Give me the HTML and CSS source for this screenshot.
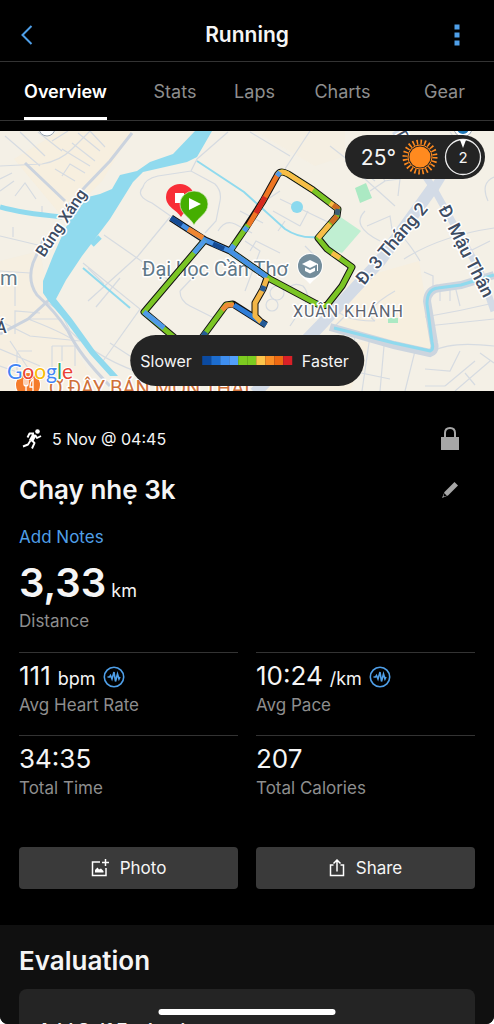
FILE: index.html
```
<!DOCTYPE html>
<html lang="en">
<head>
    <meta charset="UTF-8">
    <meta name="viewport" content="width=device-width, initial-scale=1.0">
    <title>Running</title>
    <link rel="stylesheet" href="styles.css">
</head>
<body>
    <div class="app">
        <header class="topbar">
            <button class="icon-btn back" aria-label="Back">
                <svg width="12" height="20" viewBox="0 0 12 20"><path d="M10.500 1L1.500 10L10.500 19" fill="none" stroke="#4f9fe8" stroke-width="2"/></svg>
            </button>
            <h1>Running</h1>
            <button class="icon-btn" aria-label="More">
                <svg width="6" height="22" viewBox="0 0 6 22" fill="#4f9fe8"><path d="M0.500 0.500h5v5h-5zM0.500 8.500h5v5h-5zM0.500 16.500h5v5h-5z"/></svg>
            </button>
        </header>

        <nav class="tabs">
            <button class="tab active">Overview</button>
            <button class="tab">Stats</button>
            <button class="tab">Laps</button>
            <button class="tab">Charts</button>
            <button class="tab">Gear</button>
        </nav>

        <main>
            <section class="map">
                <svg class="map-canvas" viewBox="0 130 494 260" preserveAspectRatio="xMidYMid slice">
                    <rect y="130" width="494" height="260" fill="#f4f0e6"/>
                    <!-- built up areas -->
                    <g fill="#f8eedb">
                        <path d="M60 130h72l-30 50l-38 38l-50-60z" opacity=".7"/>
                        <path d="M0 260l40-10l10 55l50 85H0z" opacity=".5"/>
                        <path d="M334 325l100 25l-15-90l-70 20zM300 350l70-10l-20 50h-90z" opacity=".7"/>
                        <path d="M255 130h90v25l-30 10z" opacity=".4"/>
                    </g>
                    <!-- parks -->
                    <path d="M339 215L361 230L342 252L327 246L321 237Z" fill="#c0efd2"/>
                    <path d="M355 187l11-5l6 15l-12 5zM388 317h10v5h-10z" fill="#abe9c3"/>
                    <!-- small streets -->
                    <g fill="none" stroke="#d6dbe1" stroke-width="1.200">
                        <path d="M0 165L42 163Q60 160 72 148L90 130M5 135L40 165M20 131L45 155M38 131L62 150M52 140L68 130M62 148L90 165M72 142L95 160M78 132L100 150M90 130L105 146M55 168L75 180M62 175L70 163L85 172M0 178L12 172M0 190L14 180M15 195L25 182L36 198M0 235L42 245M13 236V226M42 212V205"/>
                        <path d="M143 186Q145 178 158 175L191 170L215 183Q222 190 220 200L216 220L205 232M143 186Q135 195 152 202L172 216M197 158L191 170M197 158L228 131M170 216L138 255M138 255L88 300M104 234L170 280M83 262L140 308L103 360M110 342L130 355"/>
                        <path d="M218 230Q225 218 235 223L252 232M240 210L263 222M180 290Q185 285 205 263M180 290Q180 300 190 305L220 320M245 240L260 250L245 290"/>
                        <path d="M283 171L310 130M250 131L290 155M265 200L280 190M273 210L300 225M280 198L330 222M285 220L278 230M300 180L315 188M300 225L308 210M250 250L256 240L280 252M305 245L320 260"/>
                        <path d="M330 145L375 180M345 160L395 205M375 165L385 180L370 190M384 180L400 178L398 195M365 210Q350 225 380 240M367 225L390 215L393 235M395 230Q405 235 420 260M404 258Q440 235 494 227M494 176Q480 182 488 200"/>
                        <path d="M424 271L433 275V290M395 290Q360 310 375 320M434 350Q450 340 494 345M440 300V285M450 300V285M460 305L455 285M425 316Q460 310 494 302M427 325L494 318M415 350L405 390M370 335L362 390M384 345L380 390M355 333L352 370L390 378M425 368L450 370L460 350M445 385L475 360M455 390L490 360M465 372L475 384M425 385H445M480 352L494 362M335 325L345 315M334 300Q335 320 375 320"/>
                        <circle cx="277" cy="292" r="7"/><circle cx="272" cy="304" r="6"/>
                        <path d="M287 290Q292 280 303 285Q312 295 302 307L290 325"/>
                        <path d="M0 270L30 272M0 320L30 335L80 340M15 333V310L40 312M30 318H60M10 340L30 370M0 348L40 365M18 350H32M17 350V370M52 345H75V365M52 345V390M62 345V360M0 365L20 372M15 275V305M28 318Q60 330 75 340M45 300L60 310L70 330Q100 360 150 375"/>
                        <path d="M96 306L120 277M88 267L104 283M450 131L480 170M400 150L425 140M490 240L470 250"/>
                    </g>
                    <!-- main streets -->
                    <g fill="none" stroke="#cbd3de" stroke-width="3">
                        <path d="M132 132L110 160L85 186L62 212M25 162L65 200M45 235L33 262Q27 280 37 294Q55 310 68 330Q80 355 110 385M50 298L28 318L0 333"/>
                    </g>
                    <g fill="none" stroke="#d3dbe6">
                        <path d="M434 185L380 260L320 325L255 392" stroke-width="12"/>
                        <path d="M395 130L434 188L480 270L494 310" stroke-width="7"/>
                        <path d="M434 188L448 165" stroke-width="9"/>
                        <path d="M330 326L394 344L430 352Q436 350 434 342L427 300Q428 288 440 287L461 284L494 274" stroke-width="8" stroke="#ccd5df"/>
                    </g>
                    <!-- water -->
                    <path d="M195 130L173 153L150 161L137 170L120 174L112 188L100 193L88 196L72 216L65 228L53 255L43 280L43 292L50 302L67 322L90 353L110 375H118L95 350L72 318L56 298L66 279L82 255L110 218L133 181L143 171L187 161L197 156L212 130Z" fill="#90daee"/>
                    <g fill="none" stroke="#90daee">
                        <path d="M0 206Q20 212 62 216" stroke-width="5"/>
                        <path d="M197 160L244 191L285 228Q300 238 318 236" stroke-width="2"/>
                        <path d="M83 267L130 307" stroke-width="2"/>
                        <path d="M92 244L100 236" stroke-width="5"/>
                        <path d="M334 327L394 342L430 350Q434 349 432 341L427 303Q427 288 438 287L461 284L494 274" stroke-width="3"/>
                    </g>
                    <circle cx="297" cy="206" r="6" fill="#8bd9ee"/>

                    <!-- place names under the track -->
                    <text class="place uni" x="142" y="275">Đại học Cần Thơ</text>

                    <!-- track -->
                    <g fill="none" stroke="#111" stroke-width="7" stroke-linejoin="round">
                        <path d="M171 217L188 228L205 239L230 250L245 228L263 200L278 173Q281 169 288 173L313 189L338 208L337 215L318 237L327 248L352 266L342 285L327 304Q322 306 315 302L270 278L230 250"/>
                        <path d="M205 239L144 311L176 338M201 338L226 304L233 303L266 324M267 277L263 288L255 302V315L261 321"/>
                    </g>
                    <g fill="none" stroke-width="5" stroke-linejoin="round">
                        <path d="M230 250L270 278L315 302Q322 306 327 304L342 285L352 266L327 248L318 237L337 215L338 208L313 189L288 173Q281 169 278 173" stroke="#7bc525"/>
                        <path d="M278 173Q281 169 288 173L313 189M330 202L337 207M318 237L330 223M332 252L340 257" stroke="#f8bd47"/>
                        <path d="M337 215L331 222M333 204L339 208" stroke="#cc6b23"/>
                        <path d="M338 208L337 214" stroke="#3d5c74"/>
                        <path d="M278 173L263 200L248 225" stroke="#ee7623"/>
                        <path d="M265 196L256 212" stroke="#d52a20"/>
                        <path d="M248 224L230 250" stroke="#7bc525"/>
                        <path d="M247 226L244 230M234 244L230 250M280 171L277 175" stroke="#4f9ae8"/>
                        <path d="M171 217L188 228L205 239L230 250L267 276" stroke="#4590e4"/>
                        <path d="M171 217L182 224M213 243L224 248" stroke="#154b94"/>
                        <path d="M188 228L203 237" stroke="#ef8631"/>
                        <path d="M205 239L144 311L176 338" stroke="#7bc525"/>
                        <path d="M205 239L194 252M144 311L164 327" stroke="#4f9ae8"/>
                        <path d="M201 338L226 304L233 303" stroke="#7bc525"/>
                        <path d="M222 309L227 304L234 304" stroke="#ef8b36"/>
                        <path d="M234 304L266 324" stroke="#2f7dd7"/>
                        <path d="M267 277L263 288L255 302V315L261 321" stroke="#f3b647"/>
                        <path d="M264 285L262 290M261 321L266 324M203 335L206 331" stroke="#255b96"/>
                    </g>

                    <!-- university pin -->
                    <path d="M310 283C306 278 297 274 297 265A13 13 0 0 1 323 265C323 274 314 278 310 283Z" fill="#fff"/>
                    <circle cx="310" cy="265" r="12" fill="#748d9b"/>
                    <path d="M302 263L310 259L318 263L310 267Z" fill="#fff"/>
                    <path d="M305 266.500V270L310 272.500L315 270V266.500L310 269Z" fill="#fff"/>
                    <path d="M317.500 263V270" stroke="#fff"/>

                    <!-- start and finish pins -->
                    <path d="M181 216C177 209 166 206 166 196A14 13 0 0 1 194 196C194 206 185 209 181 216Z" fill="#f82e37"/>
                    <path d="M175 192h9v10h-9z" fill="#fff"/>
                    <path d="M194 224C190 216 180 213 180 203A14 13 0 0 1 208 203C208 213 198 216 194 224Z" fill="#45ae00" stroke="#dcebcf" stroke-width=".7"/>
                    <path d="M189 197L201 203L189 209Z" fill="#fff"/>

                    <g class="place">
                        <text class="road" transform="translate(44 257) rotate(-56)">Búng Xáng</text>
                        <text class="road big" transform="translate(364 285) rotate(-50)">Đ. 3 Tháng 2</text>
                        <text class="road big" transform="translate(438 208) rotate(63)">Đ. Mậu Thân</text>
                        <text class="district" x="293" y="316">XUÂN KHÁNH</text>
                        <text class="uni" x="0" y="284">m</text>
                        <text class="road" x="-4" y="332">Á</text>
                        <text class="road" transform="translate(394 131) rotate(60)">T</text>
                        <text class="food" x="49" y="394">Ơ ĐÂY BÁN MÓN THÁI</text>
                    </g>
                    <g fill="#fff" stroke="#9aa6b2"><circle cx="47" cy="127" r="8"/><circle cx="463" cy="127" r="9"/></g>
                    <circle cx="463" cy="127" r="6" fill="#1d77b8"/>
                    <circle cx="28" cy="384" r="13" fill="#fff"/>
                    <circle cx="28" cy="384" r="12" fill="#f57c2b"/>
                    <path d="M24 378V383Q24 385 26 385V391M26 378V385M28 378V383Q28 385 26 385M33 391V378Q30 380 30 386H33" fill="none" stroke="#fff" stroke-width="1.300"/>
                    <text class="google" x="7" y="378"><tspan fill="#4285f4">G</tspan><tspan fill="#ea4335">o</tspan><tspan fill="#fbbc05">o</tspan><tspan fill="#4285f4">g</tspan><tspan fill="#34a853">l</tspan><tspan fill="#ea4335">e</tspan></text>
                </svg>

                <div class="weather">
                    <span>25°</span>
                    <svg width="36" height="36" viewBox="-18 -18 36 36">
                        <circle r="14.500" fill="none" stroke="#ff8a1f" stroke-width="6" stroke-dasharray="1.500 2.296"/>
                        <circle r="12.500" fill="#242424"/>
                        <circle r="12" fill="none" stroke="#ff8a1f"/>
                        <circle r="10.500" fill="#ff8a1f"/>
                    </svg>
                    <svg width="38" height="38" viewBox="-19 -19 38 38">
                        <circle r="17.500" fill="none" stroke="#eee" stroke-width="1.300"/>
                        <path d="M-3 -17H3L0 -9Z" fill="#fff"/>
                        <text class="wind" y="6" text-anchor="middle">2</text>
                    </svg>
                </div>

                <div class="legend">
                    <span>Slower</span>
                    <div class="scale"><i class="s1"></i><i class="s2"></i><i class="s3"></i><i class="s4"></i><i class="s5"></i><i class="s5"></i><i class="s6"></i><i class="s7"></i><i class="s8"></i><i class="s9"></i></div>
                    <span>Faster</span>
                </div>
            </section>

            <section class="summary">
                <div class="row meta">
                    <svg width="20" height="20" viewBox="0 0 20 20">
                        <circle cx="15.500" cy="2.500" r="2.300" fill="#fff"/>
                        <path d="M12.500 5.500L9 12" fill="none" stroke="#fff" stroke-width="4.500" stroke-linejoin="round"/>
                        <path d="M12 4.500L7.500 4.500L5.500 8.500M13 6L15 9L19 7M9.500 11L12.500 14L10 19.500M8.500 11.500L6 15.500L1 17.500" fill="none" stroke="#fff" stroke-width="1.900" stroke-linejoin="round"/>
                    </svg>
                    <span>5 Nov @ 04:45</span>
                    <button class="icon-btn end" aria-label="Privacy">
                        <svg width="18" height="24" viewBox="0 0 18 24"><path d="M0 10h18v13H0z" fill="#a6a6a6"/><path d="M4 11V6Q4 1 9 1T14 6V11" fill="none" stroke="#a6a6a6" stroke-width="2"/></svg>
                    </button>
                </div>
                <div class="row title">
                    <h2>Chạy nhẹ 3k</h2>
                    <button class="icon-btn end" aria-label="Edit name">
                        <svg width="18" height="18" viewBox="0 0 18 18"><path d="M13.500 1L17 4.500L7 14.500L1 17L3.500 11Z" fill="#a6a6a6"/><path d="M3.500 12L4.500 13.500L6 14.500L3 15.500L2.500 15Z" fill="#000"/></svg>
                    </button>
                </div>
                <a class="notes" href="#">Add Notes</a>
                <div class="distance"><strong>3,33</strong> km</div>
                <div class="label">Distance</div>

                <div class="stats">
                    <div class="stat">
                        <div class="value">111 <small>bpm</small>
                            <svg class="pulse" width="22" height="22" viewBox="0 0 22 22"><circle cx="11" cy="11" r="9.700"/><path d="M4.500 11H6.500L7.500 9.500L9 13L11 6L12.500 15.500L14.500 8L16 13L17 11"/></svg>
                        </div>
                        <div class="label">Avg Heart Rate</div>
                    </div>
                    <div class="stat">
                        <div class="value">10:24 <small>/km</small>
                            <svg class="pulse" width="22" height="22" viewBox="0 0 22 22"><circle cx="11" cy="11" r="9.700"/><path d="M4.500 11H6.500L7.500 9.500L9 13L11 6L12.500 15.500L14.500 8L16 13L17 11"/></svg>
                        </div>
                        <div class="label">Avg Pace</div>
                    </div>
                    <div class="stat">
                        <div class="value">34:35</div>
                        <div class="label">Total Time</div>
                    </div>
                    <div class="stat">
                        <div class="value">207</div>
                        <div class="label">Total Calories</div>
                    </div>
                </div>

                <div class="actions">
                    <button class="action">
                        <svg width="18" height="18" viewBox="0 0 18 18"><path d="M9 3H1.500V16.500H15V9M14.500 0V7M11 3.500H18" fill="none" stroke="#fff" stroke-width="1.500"/><path d="M4 13.500V11L6.500 8.500L8 10.500L10 9.500L12.500 12V13.500Z" fill="#fff"/></svg>
                        Photo
                    </button>
                    <button class="action">
                        <svg width="16" height="18" viewBox="0 0 16 18"><path d="M4.500 6H1.500V16.500H14.500V6H11.500M8 12.500V1.500M4.500 4.500L8 1L11.500 4.500" fill="none" stroke="#fff" stroke-width="1.500"/></svg>
                        Share
                    </button>
                </div>
            </section>

            <section class="evaluation">
                <h2>Evaluation</h2>
                <div class="card">Add Self Evaluation</div>
            </section>
        </main>
        <div class="home-bar"></div>
    </div>
</body>
</html>
```
FILE: styles.css
```
*{
    margin: 0;
    padding: 0;
    box-sizing: border-box;
}
html{
    background-color: white;
}
body{
    font-family: Inter, "Liberation Sans", sans-serif;
    color: #f5f5f5;
}
button{
    font-family: inherit;
    color: inherit;
    background: none;
    border: none;
    cursor: pointer;
}
svg{
    display: block;
}
.app{
    position: relative;
    display: flex;
    flex-direction: column;
    height: 100vh;
    overflow: hidden;
    background-color: black;
    border-radius: 0 0 8px 8px;
}
.topbar{
    display: flex;
    align-items: center;
    justify-content: space-between;
    padding: 20px 14px 11px;
    border-bottom: 1px solid #333;
}
.topbar h1{
    font-size: 21px;
    line-height: 30px;
    font-weight: 600;
}
.icon-btn{
    display: flex;
    align-items: center;
    justify-content: center;
    width: 26px;
    height: 26px;
}
.topbar .icon-btn{
    width: 46px;
}
.topbar .back{
    justify-content: flex-start;
    padding-left: 7px;
}
.tabs{
    display: grid;
    grid-template-columns: 131fr 88fr 71fr 105fr 99fr;
    justify-items: center;
    border-bottom: 1px solid #333;
}
.tab{
    height: 58px;
    padding-top: 4px;
    border-bottom: 3px solid transparent;
    font-size: 18px;
    color: #8e8e8e;
}
.tab.active{
    color: white;
    font-weight: 600;
    border-color: white;
}
main{
    flex: 1;
    overflow: hidden;
    padding-top: 10px;
}

/* map */
.map{
    position: relative;
    height: 260px;
}
.map-canvas{
    width: 100%;
    height: 100%;
}
.place{
    paint-order: stroke;
    stroke: #fff;
    stroke-width: 3px;
    stroke-linejoin: round;
    font-family: Roboto, sans-serif;
}
.uni{
    font-size: 20px;
    fill: #5f7888;
}
.road{
    font-size: 16px;
    font-weight: 500;
    fill: #3d4c63;
}
.big{
    font-size: 18px;
}
.district{
    font-size: 16px;
    fill: #5c6470;
    letter-spacing: 1px;
}
.food{
    font-size: 20px;
    fill: #d0713a;
}
.google{
    font-family: Lato, sans-serif;
    font-size: 21px;
    paint-order: stroke;
    stroke: white;
    stroke-width: 2px;
}
.weather{
    position: absolute;
    top: 4px;
    right: 9px;
    display: flex;
    align-items: center;
    gap: 6px;
    height: 44px;
    padding: 0 3px 0 16px;
    border-radius: 22px;
    background-color: #242424;
    font-size: 21px;
}
.wind{
    font-size: 15px;
    fill: #f5f5f5;
}
.legend{
    position: absolute;
    bottom: 5px;
    left: 50%;
    transform: translateX(-50%);
    display: flex;
    align-items: center;
    gap: 10px;
    height: 51px;
    padding: 0 15px 0 10px;
    border-radius: 26px;
    background-color: #242424;
    font-size: 16px;
}
.scale{
    display: flex;
}
.scale i{
    width: 9px;
    height: 9px;
}
.s1{ background-color: #0b4aa0; }
.s2{ background-color: #1c6dd0; }
.s3{ background-color: #3f8ff0; }
.s4{ background-color: #529ffb; }
.s5{ background-color: #7ccb20; }
.s6{ background-color: #fcc54b; }
.s7{ background-color: #fa8f26; }
.s8{ background-color: #ee6a12; }
.s9{ background-color: #d92027; }

/* summary */
.summary{
    padding: 35px 19px 36px;
}
.row{
    display: flex;
    align-items: center;
}
.meta{
    gap: 10px;
    padding-left: 3px;
    font-size: 16px;
    line-height: 26px;
}
.end{
    margin-left: auto;
    margin-right: 12px;
}
.title{
    margin-top: 22px;
}
h2{
    font-size: 26px;
    line-height: 32px;
    font-weight: 600;
}
.notes{
    display: block;
    margin-top: 19px;
    font-size: 17px;
    line-height: 24px;
    color: #4f9fe8;
    text-decoration: none;
}
.distance{
    margin-top: 16px;
    font-size: 18px;
    line-height: 36px;
}
.distance strong{
    font-size: 40px;
    font-weight: 600;
}
.label{
    font-size: 17px;
    line-height: 24px;
    color: #8e8e8e;
}
.stats{
    display: grid;
    grid-template-columns: 1fr 1fr;
    column-gap: 18px;
    margin-top: 19px;
}
.stat{
    height: 83px;
    padding-top: 7px;
    border-top: 1px solid #333;
}
.value{
    display: flex;
    align-items: baseline;
    gap: 7px;
    height: 33px;
    font-size: 26px;
    line-height: 32px;
}
.value small{
    font-size: 18px;
    line-height: 20px;
}
.pulse{
    align-self: center;
    fill: none;
    stroke: #4f9fe8;
    stroke-width: 1.6px;
}
.actions{
    display: grid;
    grid-template-columns: 1fr 1fr;
    gap: 18px;
    margin-top: 29px;
}
.action{
    display: flex;
    align-items: center;
    justify-content: center;
    gap: 11px;
    height: 42px;
    border-radius: 4px;
    background-color: #3a3a3a;
    font-size: 17px;
}

/* evaluation */
.evaluation{
    padding: 20px 19px 0;
    background-color: #101010;
}
.card{
    margin-top: 12px;
    padding: 30px 19px;
    border-radius: 8px;
    background-color: #242424;
    font-size: 18px;
    line-height: 24px;
    font-weight: 600;
}
.home-bar{
    position: absolute;
    bottom: 9px;
    left: 50%;
    transform: translateX(-50%);
    width: 177px;
    height: 6px;
    border-radius: 3px;
    background-color: white;
}
```
